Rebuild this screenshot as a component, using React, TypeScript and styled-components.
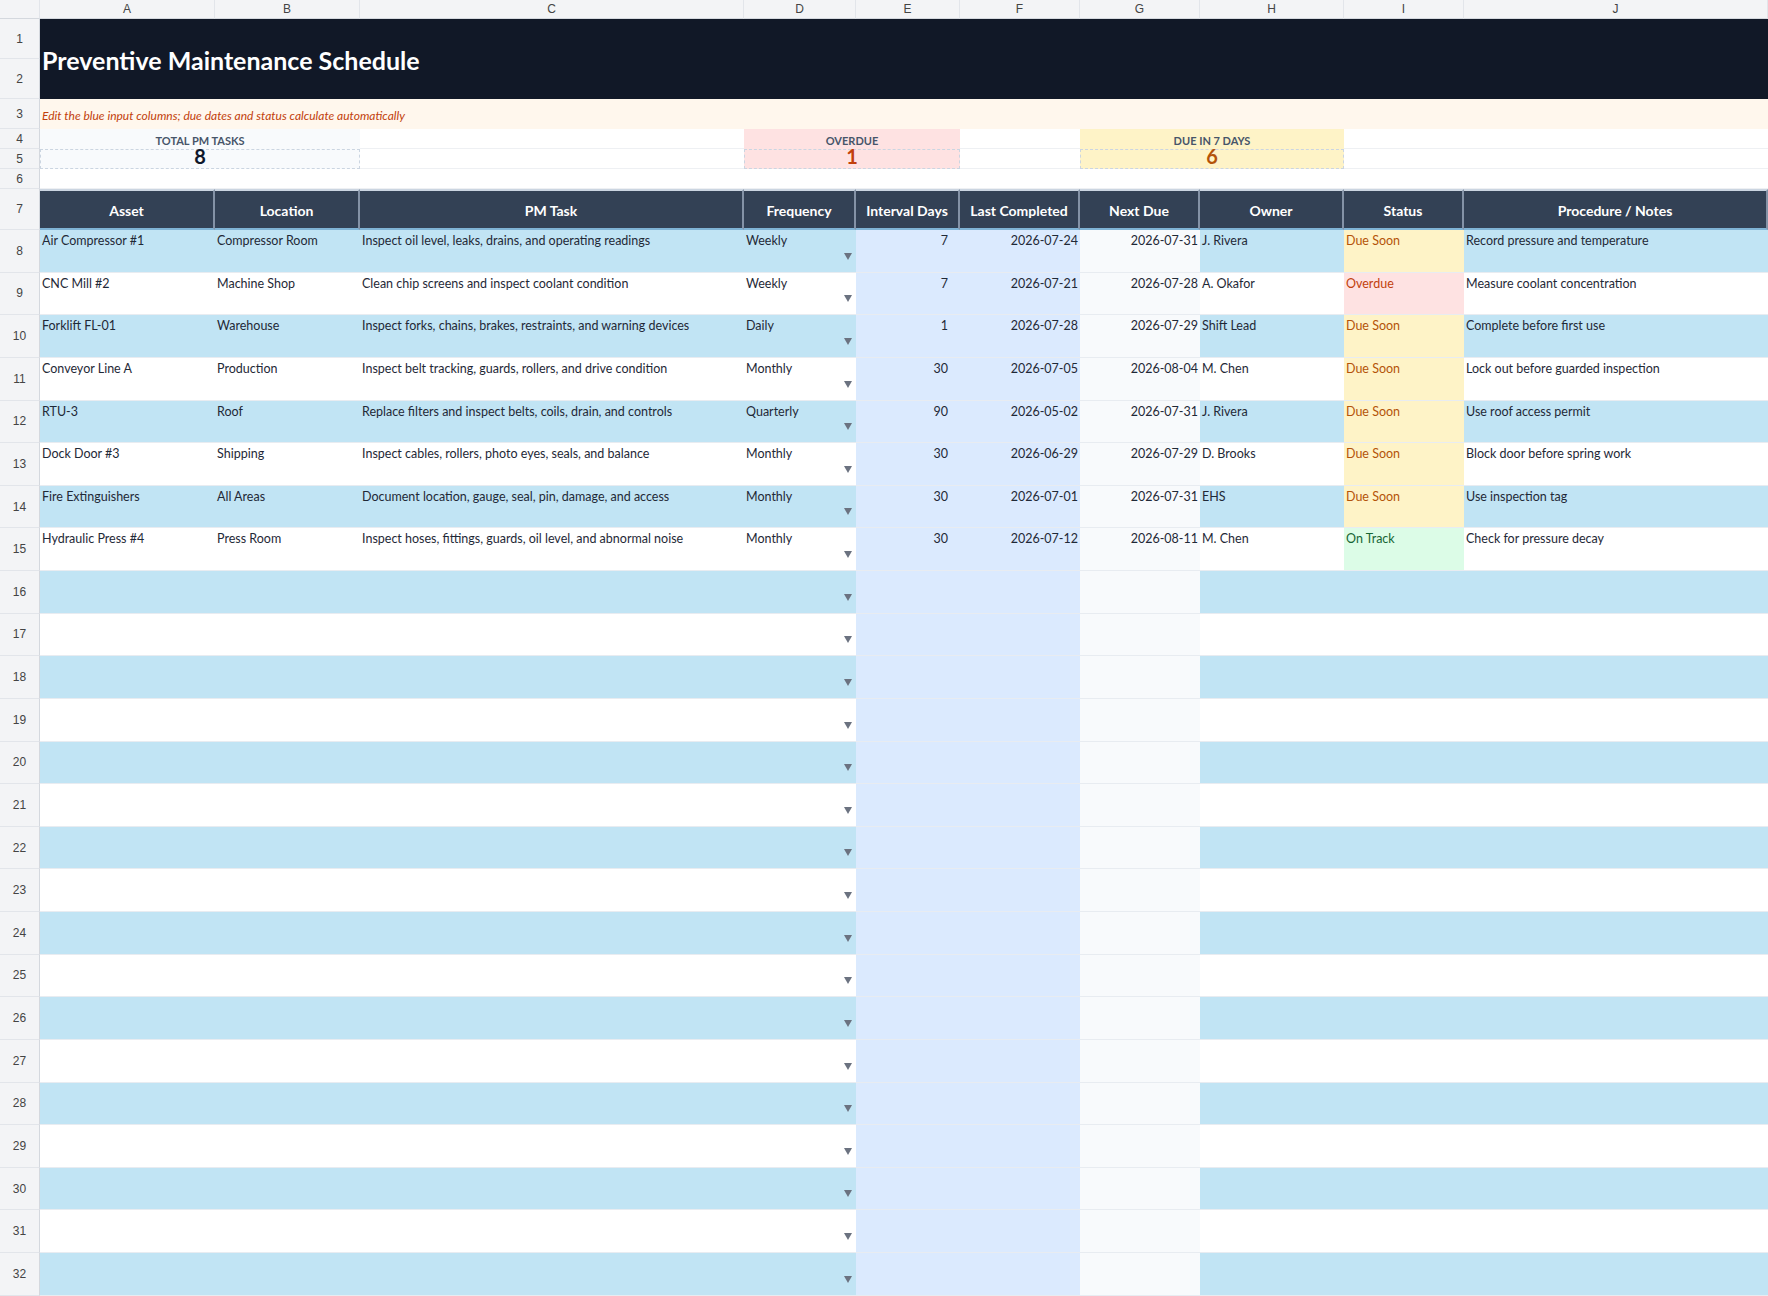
import React from 'react'
import styled, { createGlobalStyle } from 'styled-components'

const GlobalStyle = createGlobalStyle`
  html, body { margin: 0; padding: 0; background: #fff; }
  body { font-family: Lato, "Open Sans", "Liberation Sans", sans-serif; overflow: hidden; }
`

const COLS = [40, 175, 145, 384, 112, 104, 120, 120, 144, 120, 304]
const LETTERS = ['A', 'B', 'C', 'D', 'E', 'F', 'G', 'H', 'I', 'J']
const ROW_H = 42.64

type Task = {
    asset: string
    location: string
    task: string
    freq: string
    days: number
    last: string
    next: string
    owner: string
    status: 'Due Soon' | 'Overdue' | 'On Track'
    notes: string
}

const TASKS: Task[] = [
    { asset: 'Air Compressor #1', location: 'Compressor Room', task: 'Inspect oil level, leaks, drains, and operating readings', freq: 'Weekly', days: 7, last: '2026-07-24', next: '2026-07-31', owner: 'J. Rivera', status: 'Due Soon', notes: 'Record pressure and temperature' },
    { asset: 'CNC Mill #2', location: 'Machine Shop', task: 'Clean chip screens and inspect coolant condition', freq: 'Weekly', days: 7, last: '2026-07-21', next: '2026-07-28', owner: 'A. Okafor', status: 'Overdue', notes: 'Measure coolant concentration' },
    { asset: 'Forklift FL-01', location: 'Warehouse', task: 'Inspect forks, chains, brakes, restraints, and warning devices', freq: 'Daily', days: 1, last: '2026-07-28', next: '2026-07-29', owner: 'Shift Lead', status: 'Due Soon', notes: 'Complete before first use' },
    { asset: 'Conveyor Line A', location: 'Production', task: 'Inspect belt tracking, guards, rollers, and drive condition', freq: 'Monthly', days: 30, last: '2026-07-05', next: '2026-08-04', owner: 'M. Chen', status: 'Due Soon', notes: 'Lock out before guarded inspection' },
    { asset: 'RTU-3', location: 'Roof', task: 'Replace filters and inspect belts, coils, drain, and controls', freq: 'Quarterly', days: 90, last: '2026-05-02', next: '2026-07-31', owner: 'J. Rivera', status: 'Due Soon', notes: 'Use roof access permit' },
    { asset: 'Dock Door #3', location: 'Shipping', task: 'Inspect cables, rollers, photo eyes, seals, and balance', freq: 'Monthly', days: 30, last: '2026-06-29', next: '2026-07-29', owner: 'D. Brooks', status: 'Due Soon', notes: 'Block door before spring work' },
    { asset: 'Fire Extinguishers', location: 'All Areas', task: 'Document location, gauge, seal, pin, damage, and access', freq: 'Monthly', days: 30, last: '2026-07-01', next: '2026-07-31', owner: 'EHS', status: 'Due Soon', notes: 'Use inspection tag' },
    { asset: 'Hydraulic Press #4', location: 'Press Room', task: 'Inspect hoses, fittings, guards, oil level, and abnormal noise', freq: 'Monthly', days: 30, last: '2026-07-12', next: '2026-08-11', owner: 'M. Chen', status: 'On Track', notes: 'Check for pressure decay' },
]

const STATUS = {
    'Due Soon': { bg: '#fef3c7', fg: '#b45309' },
    Overdue: { bg: '#fee2e2', fg: '#c2410c' },
    'On Track': { bg: '#dcfce7', fg: '#166534' },
}

const Sheet = styled.div`
    display: grid;
    grid-template-columns: ${COLS.map((c) => c + 'px').join(' ')};
    grid-template-rows: 19px 40px 40px 30px 20px 20px 20px 41px repeat(25, ${ROW_H}px);
    width: 1768px;
    height: 1296px;
    overflow: hidden;
`

const ColHead = styled.div`
    background: #f3f4f6;
    border-right: 1px solid #e2e5ea;
    border-bottom: 1px solid #d4d8de;
    font-family: 'Liberation Sans', Arial, sans-serif;
    font-size: 12px;
    color: #444;
    display: flex;
    align-items: center;
    justify-content: center;
`

const RowHead = styled.div`
    grid-column: 1;
    background: #f3f4f6;
    border-bottom: 1px solid #e2e5ea;
    border-right: 1px solid #d4d8de;
    font-family: 'Liberation Sans', Arial, sans-serif;
    font-size: 12px;
    color: #444;
    display: flex;
    align-items: center;
    justify-content: center;
`

const Title = styled.div`
    grid-column: 2 / span 10;
    grid-row: 2 / span 2;
    background: #111827;
    color: #fff;
    font-size: 25px;
    font-weight: 700;
    display: flex;
    align-items: center;
    padding-left: 2px;
    padding-top: 2px;
`

const Note = styled.div`
    grid-column: 2 / span 10;
    background: #fff7ed;
    color: #c2410c;
    font-style: italic;
    font-size: 12px;
    display: flex;
    align-items: center;
    padding-left: 2px;
    padding-top: 2px;
`

const KpiLabel = styled.div<{ $col: number; $bg: string }>`
    grid-column: ${(p) => p.$col} / span 2;
    background: ${(p) => p.$bg};
    color: #475569;
    font-size: 11px;
    font-weight: 700;
    text-align: center;
    padding-top: 5px;
    line-height: 14px;
`

const KpiValue = styled.div<{ $col: number; $bg: string; $fg: string }>`
    grid-column: ${(p) => p.$col} / span 2;
    background: ${(p) => p.$bg};
    color: ${(p) => p.$fg};
    border: 1px dashed #cbd5e1;
    font-size: 20px;
    font-weight: 700;
    text-align: center;
    line-height: 12px;
    box-sizing: border-box;
`

const Blank = styled.div<{ $span?: number }>`
    grid-column: span ${(p) => p.$span || 1};
    border-bottom: 1px solid #eef0f3;
`

const Header = styled.div`
    background: #334155;
    color: #fff;
    font-size: 14px;
    font-weight: 700;
    display: flex;
    align-items: center;
    justify-content: center;
    padding-top: 1px;
    border-right: 2px solid #8492a6;
    border-top: 2px solid #cbd5e1;
    border-bottom: 2px solid #7fb3d5;
    box-sizing: border-box;
    &:last-child { border-right: none; }
`

const Cell = styled.div<{ $bg: string; $fg?: string; $right?: boolean }>`
    position: relative;
    background: ${(p) => p.$bg};
    color: ${(p) => p.$fg || '#1f2937'};
    font-size: 12.5px;
    padding: 3px 2px 0;
    text-align: ${(p) => (p.$right ? 'right' : 'left')};
    border-bottom: 1px solid #e8ecf1;
    white-space: nowrap;
    overflow: hidden;
    box-sizing: border-box;
`

const Arrow = styled.span`
    position: absolute;
    right: 4px;
    bottom: 12px;
    width: 0;
    height: 0;
    border-left: 4px solid transparent;
    border-right: 4px solid transparent;
    border-top: 7px solid #6b7280;
`

const Days = styled.span`
    padding-right: 10px;
`

const HEADERS = ['Asset', 'Location', 'PM Task', 'Frequency', 'Interval Days', 'Last Completed', 'Next Due', 'Owner', 'Status', 'Procedure / Notes']

function DataRow({ n, t }: { n: number; t?: Task }) {
    const band = n % 2 === 0 ? '#c1e4f4' : '#ffffff'
    const input = '#dbeafe'
    const calc = '#f8fafc'
    const st = t ? STATUS[t.status] : { bg: band, fg: undefined }
    return (
        <>
            <RowHead>{n}</RowHead>
            <Cell $bg={band}>{t?.asset}</Cell>
            <Cell $bg={band}>{t?.location}</Cell>
            <Cell $bg={band}>{t?.task}</Cell>
            <Cell $bg={band}>
                {t?.freq}
                <Arrow />
            </Cell>
            <Cell $bg={input} $right>
                {t && <Days>{t.days}</Days>}
            </Cell>
            <Cell $bg={input} $right>{t?.last}</Cell>
            <Cell $bg={calc} $right>{t?.next}</Cell>
            <Cell $bg={band}>{t?.owner}</Cell>
            <Cell $bg={st.bg} $fg={st.fg}>{t?.status}</Cell>
            <Cell $bg={band}>{t?.notes}</Cell>
        </>
    )
}

export default function App() {
    const rows = Array.from({ length: 25 }, (_, i) => i + 8)
    return (
        <>
            <GlobalStyle />
            <Sheet>
                <ColHead />
                {LETTERS.map((l) => (
                    <ColHead key={l}>{l}</ColHead>
                ))}

                <RowHead>1</RowHead>
                <Title>Preventive Maintenance Schedule</Title>
                <RowHead>2</RowHead>

                <RowHead>3</RowHead>
                <Note>Edit the blue input columns; due dates and status calculate automatically</Note>

                <RowHead>4</RowHead>
                <KpiLabel $col={2} $bg="#f8fafc">TOTAL PM TASKS</KpiLabel>
                <Blank />
                <KpiLabel $col={5} $bg="#fee2e2">OVERDUE</KpiLabel>
                <Blank />
                <KpiLabel $col={8} $bg="#fef3c7">DUE IN 7 DAYS</KpiLabel>
                <Blank $span={2} />

                <RowHead>5</RowHead>
                <KpiValue $col={2} $bg="#f8fafc" $fg="#0f172a">8</KpiValue>
                <Blank />
                <KpiValue $col={5} $bg="#fee2e2" $fg="#c2410c">1</KpiValue>
                <Blank />
                <KpiValue $col={8} $bg="#fef3c7" $fg="#b45309">6</KpiValue>
                <Blank $span={2} />

                <RowHead>6</RowHead>
                <Blank $span={10} />

                <RowHead>7</RowHead>
                {HEADERS.map((h) => (
                    <Header key={h}>{h}</Header>
                ))}

                {rows.map((n) => (
                    <DataRow key={n} n={n} t={TASKS[n - 8]} />
                ))}
            </Sheet>
        </>
    )
}
